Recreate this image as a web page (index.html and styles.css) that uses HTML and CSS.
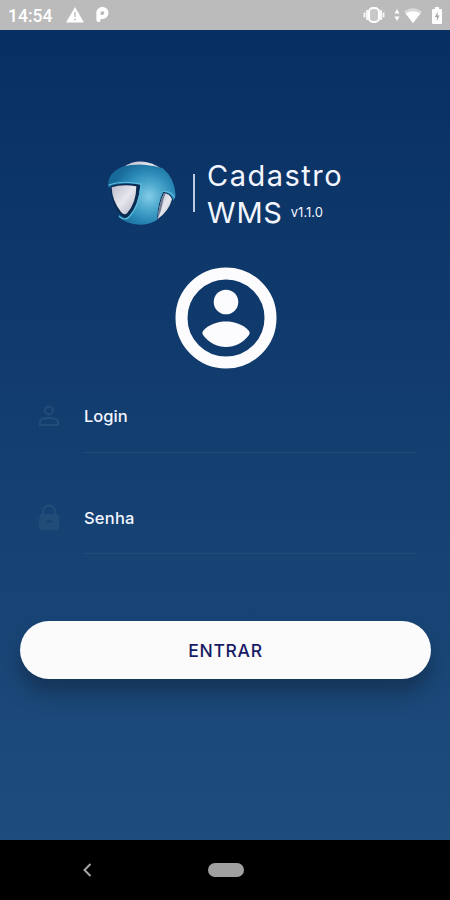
FILE: index.html
```html
<!DOCTYPE html>
<html lang="pt-BR">
<head>
	<meta charset="utf-8">
	<title>Cadastro WMS</title>
	<link rel="stylesheet" href="styles.css">
</head>
<body>
	<div class="statusbar">
		<span class="clock">14:54</span>
		<svg class="warn" width="18" height="16" viewBox="0 0 18 16"><path d="M9 0L18 15.5H0z" fill="#fff"/><path d="M9 5v5M9 11.5v2" stroke="#ccc" stroke-width="1.8"/></svg>
		<svg class="parking" width="13" height="16" viewBox="0 0 13 16"><path d="M2.500 13V7A4 4 0 1 1 6.500 10H5" fill="none" stroke="#fff" stroke-width="4.200" stroke-linecap="round"/></svg>
		<svg class="vibrate" width="22" height="16" viewBox="0 0 22 16"><rect x="6" y="1" width="10" height="14" rx="4" fill="#c9c9c9" stroke="#fff" stroke-width="2"/><path d="M4 3v10M18 3v10M1.500 5.500v5M20.500 5.500v5" stroke="#f4f4f4" stroke-width="2"/></svg>
		<svg class="data" width="6" height="12" viewBox="0 0 6 12"><path d="M3 0l2.500 4.500h-5zM3 12L.5 7.500h5z" fill="#fff"/></svg>
		<svg class="wifi" width="18" height="15" viewBox="0 0 18 15"><path d="M0 3.500Q9-3.500 18 3.500L9 15z" fill="#d8d8d8"/><path d="M1.500 5.500Q9 1 16.500 5.500L9 15z" fill="#fff"/></svg>
		<svg class="battery" width="10" height="17" viewBox="0 0 10 17"><path d="M3 0h4v2h2q1 0 1 1v13q0 1-1 1H1q-1 0-1-1V3q0-1 1-1h2z" fill="#fff"/><path d="M5.800 4.500L2.800 10h2v4L7.500 8.500H5.600z" fill="#aaa"/></svg>
	</div>

	<main class="login">
		<div class="brand">
			<svg class="logo" width="70" height="66" viewBox="6 9 210 198">
				<defs>
					<radialGradient id="blue" gradientUnits="userSpaceOnUse" cx="132" cy="118" r="112">
						<stop offset="0" stop-color="#84cce6"/>
						<stop offset=".3" stop-color="#55aed2"/>
						<stop offset=".65" stop-color="#2b8ab7"/>
						<stop offset="1" stop-color="#176a99"/>
					</radialGradient>
					<linearGradient id="silver" x1="0" y1="0" x2="1" y2="1">
						<stop offset="0" stop-color="#bcbdcd"/>
						<stop offset=".5" stop-color="#e6e6ed"/>
						<stop offset="1" stop-color="#b4b5c6"/>
					</linearGradient>
				</defs>
				<path d="M56 30Q110-6 174 38L140 45z" fill="url(#silver)"/>
				<!-- band and stem -->
				<path d="M10 84Q8 50 50 30Q88 20 124 24Q150 27 174 34Q210 66 212 115L205 131Q198 108 176 105Q160 140 157 188Q134 203 104 203Q62 202 40 178L46 166Q94 150 99 88Q50 76 12 92z" fill="url(#blue)"/>
				<path d="M17 88Q50 74 106 83Q101 144 72 176Q61 190 46 175Q17 136 17 88z" fill="#0a2a50"/>
				<path d="M20 91Q52 81 94 88Q94 138 66 169Q58 176 48 165Q21 131 20 91z" fill="url(#silver)"/>
				<path d="M175 105Q196 106 204 127Q194 164 157 188Q158 138 175 105z" fill="#0b3158"/>
				<path d="M177 109Q194 109 201 127Q192 162 158 186Q163 136 177 109z" fill="url(#silver)"/>
				<path d="M177 109Q161 142 158 186Q169 164 173 138Q177 118 182 110z" fill="#737b95"/>
				<path d="M10 85Q50 69 108 81Q104 148 72 180Q58 193 42 178M175 103Q201 102 209 123" fill="none" stroke="#5dbdde" stroke-width="3.500"/>
			</svg>
			<div class="divider"></div>
			<div class="name">
				<div class="line1">Cadastro</div>
				<div class="line2">WMS <small>v1.1.0</small></div>
			</div>
		</div>

		<svg class="avatar" width="102" height="102" viewBox="0 0 102 102">
			<circle cx="51" cy="51" r="44.500" fill="none" stroke="#fcfcfe" stroke-width="12"/>
			<circle cx="51" cy="35" r="12.300" fill="#fcfcfe"/>
			<path d="M28 64C34 57 43 54.500 51 54.500S68 57 74 64Q75.500 66 74 68C68 76 60 80 51 80S34 76 28 68Q26.500 66 28 64z" fill="#fcfcfe"/>
		</svg>

		<form>
			<label class="field">
				<svg width="22" height="22" viewBox="0 0 22 22" fill="none" stroke="#224d79" stroke-width="2"><circle cx="11" cy="5.500" r="4"/><path d="M2 20v-3q0-4 9-4t9 4v3z"/></svg>
				<span>Login</span>
			</label>
			<label class="field password">
				<svg width="22" height="28" viewBox="0 0 22 28"><path d="M5 11V7.500a6 6 0 0 1 12 0V11" fill="none" stroke="#214c77" stroke-width="2.400"/><path d="M2 10h17q2 0 2 2v12q0 2-2 2H3q-2 0-2-2v-6l-1-2 2-2zM8 19h6v-2l-3-1.500L8 17z" fill="#214c77" fill-rule="evenodd"/></svg>
				<span>Senha</span>
			</label>
			<button type="button">ENTRAR</button>
		</form>
	</main>

	<div class="navbar">
		<svg class="back" width="9" height="14" viewBox="0 0 9 14"><path d="M7.500 1L1.500 7l6 6" fill="none" stroke="#a5a5a5" stroke-width="2"/></svg>
		<div class="home"></div>
	</div>
</body>
</html>
```
FILE: styles.css
```css
* { box-sizing: border-box; }
body { margin: 0; width: 450px; height: 900px; overflow: hidden; font-family: Inter, "Liberation Sans", sans-serif; color: #f4f6ff; }
svg { display: block; flex: none; }

.statusbar { height: 30px; padding: 0 8px; display: flex; align-items: center; background: #bbb; color: #fff; }
.clock { width: 58px; font: 500 17.5px Roboto, sans-serif; padding-top: 2px; }
.parking { margin-left: 12px; }
.vibrate { margin-left: auto; }
.data { margin-left: 9px; }
.wifi { margin-left: 4px; }
.battery { margin-left: 10px; }

.login { height: 810px; padding-top: 126px; background: linear-gradient(#082f63, #1e4d7d); }
.brand { height: 80px; display: flex; align-items: flex-start; padding-left: 107px; }
.logo { margin-top: 4px; }
.divider { width: 2px; height: 38px; margin: 18px 0 0 16px; background: #bdcae3; }
.name { margin-left: 12px; padding-top: 1px; font-size: 29px; line-height: 37px; white-space: nowrap; }
.line1 { letter-spacing: 1.5px; }
.line2 { display: flex; letter-spacing: 0.8px; }
.name small { margin-left: 8px; font-size: 13px; line-height: 36px; letter-spacing: 0; }

.avatar { margin: 31px 0 0 174.5px; }

.field { display: flex; align-items: center; height: 73px; margin: 11px 34px 0 84px; border-bottom: 1px solid #214c7a; font-size: 16.5px; font-weight: 500; }
.field svg { margin-left: -46px; margin-right: 24px; }
.password { margin-top: 28px; padding-top: 2px; letter-spacing: 0.2px; }
button { display: block; width: 411px; height: 58px; margin: 67px 0 0 20px; border: 0; border-radius: 29px; background: #fbfbfc; color: #171b63; font: 500 17.5px Inter, sans-serif; letter-spacing: 0.7px; box-shadow: 0 13px 20px rgba(20, 42, 70, 0.65); }

.navbar { height: 60px; display: flex; align-items: center; background: #000; }
.back { margin-left: 83px; }
.home { width: 36px; height: 14px; margin-left: 116px; border-radius: 7px; background: #a0a0a0; }
```
